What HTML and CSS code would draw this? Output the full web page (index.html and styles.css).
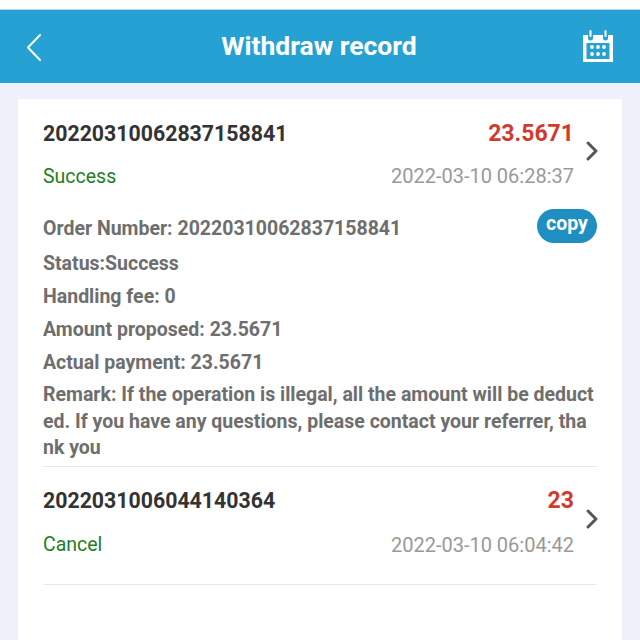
FILE: index.html
```html
<!DOCTYPE html>
<html lang="en">
<head>
    <meta charset="UTF-8">
    <meta name="viewport" content="width=device-width, initial-scale=1.0">
    <title>Withdraw record</title>
    <link rel="stylesheet" href="styles.css">
</head>
<body>
    <div class="top-strip"></div>
    <header class="nav-bar">
        <svg class="back-icon" width="18" height="30" viewBox="0 0 18 30">
            <path d="M15 3 L3 15.5 L15 28" fill="none" stroke="#fff" stroke-width="2" stroke-linecap="round" stroke-linejoin="round"/>
        </svg>
        <h1>Withdraw record</h1>
        <svg class="date-icon" width="30" height="34" viewBox="0 0 30 34">
            <path d="M0 5 H5 V8 a2.5 2.5 0 0 0 5 0 V5 H20 V8 a2.5 2.5 0 0 0 5 0 V5 H30 V32 H0 Z M3.5 13 V29 H26.5 V13 Z" fill="#fff" fill-rule="evenodd"/>
            <rect x="6.5" y="0" width="2" height="7" rx="1" fill="#fff"/>
            <rect x="21.5" y="0" width="2" height="7" rx="1" fill="#fff"/>
            <g fill="#fff">
                <circle cx="9" cy="17" r="1.9"/><circle cx="15" cy="17" r="1.9"/><circle cx="21" cy="17" r="1.9"/>
                <circle cx="9" cy="24" r="1.9"/><circle cx="15" cy="24" r="1.9"/><circle cx="21" cy="24" r="1.9"/>
            </g>
        </svg>
    </header>

    <main class="record-card">
        <section class="record">
            <div class="record-head">
                <div class="record-rows">
                    <div class="row row-top">
                        <span class="order-no">20220310062837158841</span>
                        <span class="amount">23.5671</span>
                    </div>
                    <div class="row row-bottom">
                        <span class="status">Success</span>
                        <span class="time">2022-03-10 06:28:37</span>
                    </div>
                </div>
                <svg class="arrow" width="14" height="22" viewBox="0 0 14 22">
                    <path d="M3 3 L11 11 L3 19" fill="none" stroke="#555" stroke-width="3" stroke-linecap="round" stroke-linejoin="round"/>
                </svg>
            </div>
            <div class="detail">
                <div class="detail-order">
                    <p>Order Number: 20220310062837158841</p>
                    <span class="copy-btn">copy</span>
                </div>
                <p>Status:Success</p>
                <p>Handling fee: 0</p>
                <p>Amount proposed: 23.5671</p>
                <p>Actual payment: 23.5671</p>
                <p class="remark">Remark: If the operation is illegal, all the amount will be deduct<br>ed. If you have any questions, please contact your referrer, tha<br>nk you</p>
            </div>
        </section>
        <section class="record">
            <div class="record-head">
                <div class="record-rows">
                    <div class="row row-top">
                        <span class="order-no">2022031006044140364</span>
                        <span class="amount">23</span>
                    </div>
                    <div class="row row-bottom">
                        <span class="status">Cancel</span>
                        <span class="time">2022-03-10 06:04:42</span>
                    </div>
                </div>
                <svg class="arrow" width="14" height="22" viewBox="0 0 14 22">
                    <path d="M3 3 L11 11 L3 19" fill="none" stroke="#555" stroke-width="3" stroke-linecap="round" stroke-linejoin="round"/>
                </svg>
            </div>
        </section>
    </main>
</body>
</html>
```

FILE: styles.css
```css
* {
    box-sizing: border-box;
}
html, body {
    height: 100%;
}
body {
    margin: 0;
    font-family: Roboto, sans-serif;
    background: #eef1fa;
    overflow: hidden;
}
p {
    margin: 0;
}
.top-strip {
    height: 10px;
    background: #fff;
    border-bottom: 1px solid #b9d6e6;
}
.nav-bar {
    height: 73px;
    background: #25a2d3;
    display: grid;
    grid-template-columns: 1fr auto 1fr;
    align-items: center;
    padding: 0 27px 0 25px;
}
.nav-bar h1 {
    margin: 0 0 2px;
    color: #fff;
    font-size: 26.5px;
    font-weight: 700;
}
.back-icon {
    margin-top: 1px;
}
.date-icon {
    justify-self: end;
    margin-top: 1px;
}
.record-card {
    margin: 16px 18px 0;
    height: 560px;
    padding: 0 25px;
    background: #fff;
}
.record {
    border-bottom: 1px solid #e9e9e9;
}
.record-head {
    display: flex;
    align-items: center;
}
.record-rows {
    flex: 1;
}
.row {
    display: flex;
    justify-content: space-between;
    align-items: center;
}
.row-top {
    height: 26px;
    margin-top: 21px;
}
.row-bottom {
    height: 24px;
    margin-top: 18px;
    margin-bottom: 17px;
}
.record + .record .row-bottom {
    margin-top: 19px;
    margin-bottom: 27px;
}
.order-no {
    font-size: 21.3px;
    font-weight: 700;
    color: #333;
}
.amount {
    font-size: 23px;
    font-weight: 700;
    color: #d23a2e;
}
.status {
    font-size: 19.5px;
    color: #1f7d1f;
}
.time {
    font-size: 20px;
    color: #999;
}
.arrow {
    margin-left: 11px;
    margin-right: -2px;
    margin-top: -2px;
}
.record + .record .arrow {
    margin-top: -12px;
}
.detail {
    padding: 4px 0 4px;
    font-size: 19.5px;
    font-weight: 700;
    color: #6e6e6e;
    line-height: 33px;
}
.detail-order {
    display: flex;
    justify-content: space-between;
    align-items: center;
    height: 38px;
}
.copy-btn {
    width: 60px;
    height: 34px;
    margin-top: -5px;
    border-radius: 17px;
    background: #1e8fc0;
    color: #fff;
    font-size: 19.5px;
    font-weight: 700;
    text-align: center;
    line-height: 29px;
}
.remark {
    line-height: 26.5px;
    padding-top: 3px;
}
```
